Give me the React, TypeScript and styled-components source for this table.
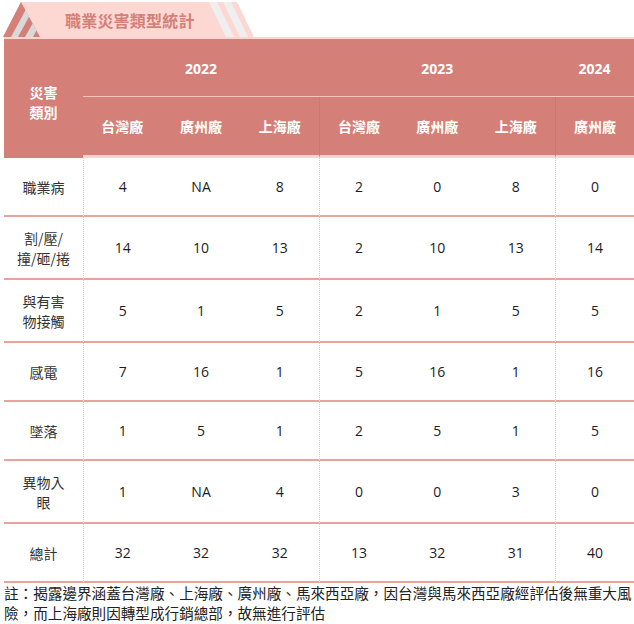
import styled, { createGlobalStyle } from "styled-components";

const GlobalStyle = createGlobalStyle`
  html, body {
    margin: 0;
    padding: 0;
    background: #ffffff;
  }
  body {
    font-family: "Open Sans", "Noto Sans CJK TC", sans-serif;
  }
`;

const colors = {
  header: "#d47f78",
  headerLight: "#fdd5d0",
  rowLine: "#e9a29c",
  dotted: "#cfcfcf",
  text: "#222222",
};

type Row = {
  label: string[];
  values: (string | number)[];
  tall?: boolean;
};

const rows: Row[] = [
  { label: ["職業病"], values: [4, "NA", 8, 2, 0, 8, 0] },
  { label: ["割/壓/", "撞/砸/捲"], values: [14, 10, 13, 2, 10, 13, 14], tall: true },
  { label: ["與有害", "物接觸"], values: [5, 1, 5, 2, 1, 5, 5], tall: true },
  { label: ["感電"], values: [7, 16, 1, 5, 16, 1, 16] },
  { label: ["墜落"], values: [1, 5, 1, 2, 5, 1, 5] },
  { label: ["異物入", "眼"], values: [1, "NA", 4, 0, 0, 3, 0], tall: true },
  { label: ["總計"], values: [32, 32, 32, 13, 32, 31, 40] },
];

const plants = ["台灣廠", "廣州廠", "上海廠", "台灣廠", "廣州廠", "上海廠", "廣州廠"];

// columns that start a new year group
const groupStart = [0, 3, 6];

function TitleTab() {
  return (
    <Tab>
      <TabShape viewBox="0 0 260 37" width="260" height="37">
        <defs>
          <clipPath id="tab-left">
            <polygon points="3,37 21,2 40,37" />
          </clipPath>
          <clipPath id="tab-body">
            <polygon points="3,37 21,2 237,2 254,37" />
          </clipPath>
        </defs>
        <polygon points="3,37 21,2 237,2 254,37" fill="#fdd8d3" />
        <g clipPath="url(#tab-body)" fill="#efefef">
          <polygon points="209,2 217,2 234,37 226,37" />
          <polygon points="223,2 231,2 248,37 240,37" />
        </g>
        <polygon points="3,37 21,2 40,37" fill={colors.header} />
        <g clipPath="url(#tab-left)" fill="#d9d9d9">
          <polygon points="11,37 18,37 37,2 30,2" />
          <polygon points="25,37 33,37 52,2 45,2" />
        </g>
      </TabShape>
      <TabTitle>職業災害類型統計</TabTitle>
    </Tab>
  );
}

export default function App() {
  return (
    <>
      <GlobalStyle />
      <Page>
        <TitleTab />
        <Table>
          <colgroup>
            <col style={{ width: 79 }} />
            {plants.map((_, i) => (
              <col key={i} />
            ))}
          </colgroup>
          <thead>
            <tr>
              <CornerCell rowSpan={2}>
                <CornerLine>災害</CornerLine>
                <CornerLine>類別</CornerLine>
              </CornerCell>
              <YearCell colSpan={3}>2022</YearCell>
              <YearCell colSpan={3}>2023</YearCell>
              <YearCell colSpan={1}>2024</YearCell>
            </tr>
            <tr>
              {plants.map((p, i) => (
                <PlantCell key={i} $divider={i > 0 && groupStart.includes(i)}>
                  {p}
                </PlantCell>
              ))}
            </tr>
          </thead>
          <tbody>
            {rows.map((row) => (
              <tr key={row.label.join("")}>
                <LabelCell $tall={row.tall}>
                  {row.label.map((line, i) => (
                    <span key={i}>
                      {i > 0 && <br />}
                      {line}
                    </span>
                  ))}
                </LabelCell>
                {row.values.map((v, i) => (
                  <ValueCell key={i} $tall={row.tall} $divider={groupStart.includes(i)}>
                    {v}
                  </ValueCell>
                ))}
              </tr>
            ))}
          </tbody>
        </Table>
        <Note>
          註：揭露邊界涵蓋台灣廠、上海廠、廣州廠、馬來西亞廠，因台灣與馬來西亞廠經評估後無重大風險，而上海廠則因轉型成行銷總部，故無進行評估
        </Note>
      </Page>
    </>
  );
}

const Page = styled.div`
  width: 634px;
  display: flex;
  flex-direction: column;
`;

const Tab = styled.div`
  display: grid;
  width: 260px;
  height: 37px;
  align-items: center;
  justify-items: start;
`;

const TabShape = styled.svg`
  grid-area: 1 / 1;
  display: block;
`;

const TabTitle = styled.div`
  grid-area: 1 / 1;
  margin-left: 65px;
  padding-top: 3px;
  font-family: "Noto Sans CJK TC", sans-serif;
  font-size: 16px;
  font-weight: 700;
  color: ${colors.header};
  letter-spacing: 0.2px;
`;

const Table = styled.table`
  width: 630px;
  margin-left: 4px;
  table-layout: fixed;
  border-collapse: separate;
  border-spacing: 0;
  font-size: 14px;
  color: ${colors.text};

  thead {
    background: ${colors.header};
  }

  thead tr:first-child th {
    border-top: 2px solid ${colors.headerLight};
  }

  thead tr:last-child th {
    border-bottom: 3px solid ${colors.headerLight};
  }
`;

const HeaderCell = styled.th`
  padding: 0;
  color: #ffffff;
  font-weight: 700;
  font-family: "Open Sans", "Noto Sans CJK TC", sans-serif;
  text-align: center;
  vertical-align: middle;
`;

const CornerCell = styled(HeaderCell)`
  padding-top: 6px;
  font-family: "Noto Sans CJK TC", sans-serif;
  font-size: 14px;
`;

const CornerLine = styled.div`
  line-height: 20px;
`;

const YearCell = styled(HeaderCell)`
  height: 58px;
  font-size: 14px;
  box-shadow: inset 0 -1px 0 #f4c3be;
`;

const PlantCell = styled(HeaderCell)<{ $divider?: boolean }>`
  height: 58px;
  font-size: 14px;
  font-family: "Noto Sans CJK TC", sans-serif;
  border-left: ${(p) => (p.$divider ? "1px solid #cd7770" : "0")};
`;

const BodyCell = styled.td<{ $tall?: boolean }>`
  height: ${(p) => (p.$tall ? "61px" : "57px")};
  padding: 0;
  text-align: center;
  vertical-align: middle;
  border-bottom: 2px solid ${colors.rowLine};
  line-height: 20px;
`;

const LabelCell = styled(BodyCell)`
  font-family: "Noto Sans CJK TC", sans-serif;
  font-size: 14px;
  color: #333333;
`;

const ValueCell = styled(BodyCell)<{ $divider?: boolean }>`
  font-size: 14px;
  color: #1c1c28;
  border-left: ${(p) => (p.$divider ? `1px dotted ${colors.dotted}` : "0")};
`;

const Note = styled.p`
  margin: 0 0 0 4px;
  width: 630px;
  font-family: "Noto Sans CJK TC", sans-serif;
  font-size: 14.6px;
  line-height: 20px;
  color: ${colors.text};
`;
